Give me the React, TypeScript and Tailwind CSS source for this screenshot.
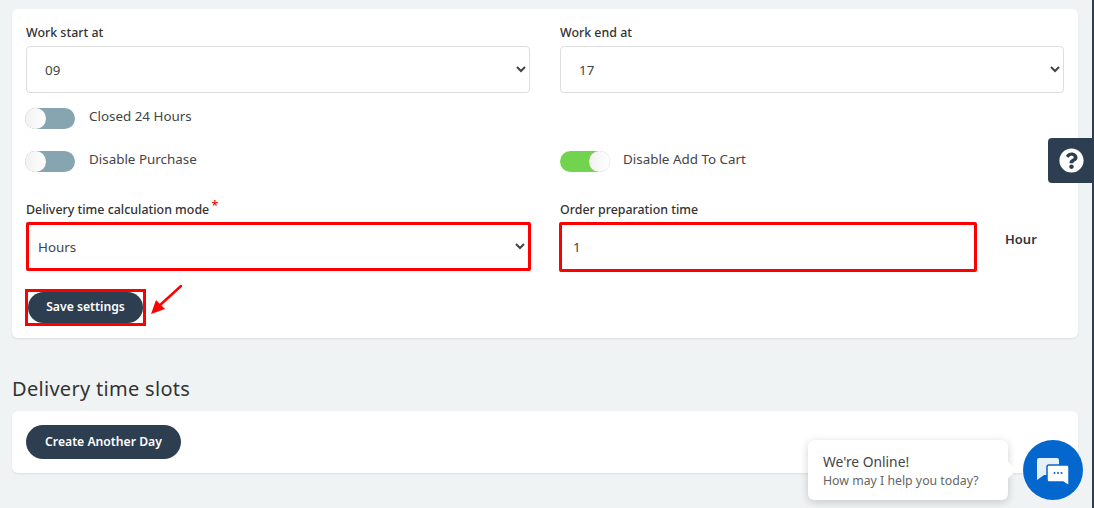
import React from "react";
import { FaQuestionCircle } from "react-icons/fa";

const Toggle = ({ label, on = false }: { label: string; on?: boolean }) => {
  return (
    <div className={`flex items-center h-[21px] ${on ? "" : "-ml-px"}`}>
      <div className={`relative w-[50px] h-[21px] rounded-full ${on ? "bg-[#72d44e]" : "bg-[#87a5b1]"}`}>
        <div
          className={`absolute top-0 w-[21px] h-[21px] rounded-full bg-gradient-to-r from-[#f1f1f1] to-white ${on ? "right-0" : "left-0"}`}
        />
      </div>
      <span className={`mb-[4px] text-[13.4px] text-[#444] ${on ? "ml-[13px]" : "ml-[14px]"}`}>{label}</span>
    </div>
  );
};

const Select = ({ value, className }: { value: string; className: string }) => {
  return (
    <select defaultValue={value} className={`block w-full bg-white text-[13.4px] text-[#444] outline-none ${className}`}>
      <option>{value}</option>
    </select>
  );
};

const App = () => {
  return (
    <div
      className="relative h-[508px] w-[1094px] overflow-hidden bg-[#eff3f4] border-r-2 border-[#2c3e50]"
      style={{ fontFamily: '"Noto Sans", sans-serif' }}
    >
      <div className="w-[1092px] pl-3 pr-[14px] pt-[9px]">
        {/* settings card */}
        <div className="h-[329px] rounded-md bg-white px-[14px] pt-[14px] shadow-[0_1px_2px_rgba(0,0,0,0.08)]">
          <div className="grid grid-cols-2 gap-x-[30px]">
            <div>
              <p className="h-[23px] text-[12.4px] leading-[20px] font-medium text-[#333]">Work start at</p>
              <Select value="09" className="h-[47px] rounded border border-[#ddd] pl-[14px] pr-1" />
            </div>
            <div>
              <p className="h-[23px] text-[12.4px] leading-[20px] font-medium text-[#333]">Work end at</p>
              <Select value="17" className="h-[47px] rounded border border-[#ddd] pl-[14px] pr-1" />
            </div>
          </div>

          <div className="mt-[15px]">
            <Toggle label="Closed 24 Hours" />
          </div>
          <div className="mt-[22px] grid grid-cols-2 gap-x-[30px]">
            <Toggle label="Disable Purchase" />
            <Toggle label="Disable Add To Cart" on />
          </div>

          <div className="mt-[27px] grid grid-cols-2 gap-x-[30px]">
            <div>
              <p className="h-[23px] text-[12.4px] leading-[22px] font-medium text-[#333]">
                Delivery time calculation mode{" "}
                <span className="relative -top-[4px] -ml-px text-[#e00]">*</span>
              </p>
              <div className="w-[505px]">
                <Select value="Hours" className="h-[49px] border-[3px] border-[#f00] rounded-[2px] pl-[5px] pr-1" />
              </div>
            </div>
            <div className="flex">
              <div>
                <p className="h-[23px] text-[12.4px] leading-[22px] font-medium text-[#333]">Order preparation time</p>
                <div className="-ml-px flex h-[50px] w-[418px] items-center border-[3px] border-[#f00] rounded-[2px] pl-[11px] text-[13.4px] text-[#444]">
                  1
                </div>
              </div>
              <span className="ml-[28px] mt-[31px] text-[13px] font-semibold text-[#333]">Hour</span>
            </div>
          </div>

          <div className="mt-[17px] -ml-px w-[121px] border-[3px] border-[#f00]">
            <button className="block h-[31px] w-full rounded-full bg-[#2c3e50] text-[12.2px] font-semibold text-white">
              Save settings
            </button>
          </div>
        </div>

        <h2 className="mt-[39px] h-[34px] text-[20px] leading-[24px] tracking-[0.3px] text-[#333]">
          Delivery time slots
        </h2>

        {/* slots card */}
        <div className="h-[62px] rounded-md bg-white px-[14px] pt-[14px] shadow-[0_1px_2px_rgba(0,0,0,0.08)]">
          <button className="h-[34px] w-[155px] rounded-full bg-[#2c3e50] pt-px text-[12.2px] font-semibold text-white">
            Create Another Day
          </button>
        </div>
      </div>

      {/* annotation arrow */}
      <svg className="absolute left-[148px] top-[283px]" width="36" height="34" viewBox="0 0 36 34" fill="none">
        <path d="M33 3 L11 23" stroke="#f00" strokeWidth="2.4" strokeLinecap="round" />
        <path d="M3 31 L8 17 L17 26 Z" fill="#f00" />
      </svg>

      {/* help tab */}
      <div className="absolute right-0 top-[138px] flex h-[45px] w-[44px] items-center pl-[11px] rounded-l bg-[#2c3e50]">
        <FaQuestionCircle className="h-[25px] w-[25px] text-white" />
      </div>

      {/* chat widget */}
      <div className="absolute left-[808px] top-[440px] h-[60px] w-[200px] rounded-md bg-white pl-[15px] pt-[12px] shadow-[0_2px_8px_rgba(0,0,0,0.18)]">
        <p className="text-[13.8px] leading-[20px] text-[#444]">We're Online!</p>
        <p className="text-[12.3px] leading-[17px] text-[#666]">How may I help you today?</p>
        <div className="absolute -right-[6px] top-[24px] h-[12px] w-[12px] rotate-45 bg-white" />
      </div>
      <div className="absolute left-[1023px] top-[440px] flex h-[60px] w-[60px] items-center justify-center rounded-full bg-[#0367ce]">
        <svg className="mt-[3px]" width="32" height="30" viewBox="0 0 32 30">
          <path d="M2 1 H20 a2 2 0 0 1 2 2 V18 H7 L0 23 V3 a2 2 0 0 1 2 -2 Z" fill="#fff" fillOpacity="0.9" />
          <path
            d="M12 8 H30 a2 2 0 0 1 2 2 V29 L26 25 H12 a2 2 0 0 1 -2 -2 V10 a2 2 0 0 1 2 -2 Z"
            fill="#fff"
            stroke="#0367ce"
            strokeWidth="1.5"
          />
          <circle cx="17.5" cy="16" r="1" fill="#0367ce" />
          <circle cx="21" cy="16" r="1" fill="#0367ce" />
          <circle cx="24.5" cy="16" r="1" fill="#0367ce" />
        </svg>
      </div>
    </div>
  );
};

export default App;
